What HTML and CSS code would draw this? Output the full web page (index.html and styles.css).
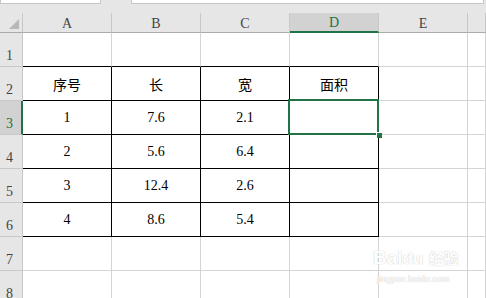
FILE: index.html
```html
<!DOCTYPE html>
<html lang="zh-CN">
<head>
  <meta charset="UTF-8">
  <title>Sheet1</title>
  <link rel="stylesheet" href="styles.css">
</head>
<body>
  <div class="sheet">
    <div class="topbar">
      <div class="namebox"></div>
      <div class="formula"></div>
    </div>

    <div class="grid">
      <div class="hd corner"><span class="tri"></span></div>
      <div class="hd col">A</div>
      <div class="hd col">B</div>
      <div class="hd col">C</div>
      <div class="hd col active">D</div>
      <div class="hd col">E</div>
      <div class="hd col"></div>

      <div class="hd row">1</div>
      <div class="cell edge-b"></div><div class="cell edge-b"></div><div class="cell edge-b"></div><div class="cell edge-b"></div><div class="cell"></div><div class="cell"></div>

      <div class="hd row">2</div>
      <div class="cell box">序号</div><div class="cell box">长</div><div class="cell box">宽</div><div class="cell box">面积</div><div class="cell"></div><div class="cell"></div>

      <div class="hd row active">3</div>
      <div class="cell box">1</div><div class="cell box">7.6</div><div class="cell box">2.1</div><div class="cell box selected"></div><div class="cell"></div><div class="cell"></div>

      <div class="hd row">4</div>
      <div class="cell box">2</div><div class="cell box">5.6</div><div class="cell box">6.4</div><div class="cell box"></div><div class="cell"></div><div class="cell"></div>

      <div class="hd row">5</div>
      <div class="cell box">3</div><div class="cell box">12.4</div><div class="cell box">2.6</div><div class="cell box"></div><div class="cell"></div><div class="cell"></div>

      <div class="hd row">6</div>
      <div class="cell box">4</div><div class="cell box">8.6</div><div class="cell box">5.4</div><div class="cell box"></div><div class="cell"></div><div class="cell"></div>

      <div class="hd row">7</div>
      <div class="cell"></div><div class="cell"></div><div class="cell"></div><div class="cell"></div><div class="cell"></div><div class="cell"></div>

      <div class="hd row">8</div>
      <div class="cell"></div><div class="cell"></div><div class="cell"></div><div class="cell"></div><div class="cell"></div><div class="cell"></div>
    </div>

    <div class="watermark">
      <div class="wm-logo">Bai<span class="paw">du</span> <span class="wm-cn">经验</span></div>
      <div class="wm-url">jingyan.baidu.com</div>
    </div>
  </div>
</body>
</html>
```

FILE: styles.css
```css
body {
  margin: 0;
  font-family: "Liberation Serif", "Noto Sans CJK SC", serif;
  color: #000;
  background: #fff;
}
.sheet {
  position: relative;
  width: 486px;
  height: 298px;
  overflow: hidden;
  background: #e6e6e6;
}
.topbar {
  display: flex;
  height: 4px;
  margin-bottom: 9px;
}
.namebox, .formula {
  height: 3px;
  background: #fff;
  border: 1px solid #c6c6c6;
  border-top: none;
}
.namebox {
  width: 99px;
}
.formula {
  margin-left: 30px;
  width: 351px;
}
.grid {
  display: grid;
  grid-template-columns: 23px repeat(5, 89px) 1fr;
  grid-template-rows: 20px;
  grid-auto-rows: 34px;
  background: #fff;
}
.hd {
  box-sizing: border-box;
  background: #e6e6e6;
  color: #444;
  font-size: 14px;
  border-right: 1px solid #c8c8c8;
  border-bottom: 1px solid #ababab;
}
.corner {
  position: relative;
}
.tri {
  position: absolute;
  right: 3px;
  bottom: 3px;
  width: 0;
  height: 0;
  border-left: 10px solid transparent;
  border-bottom: 10px solid #b8b8b8;
}
.col {
  display: flex;
  align-items: center;
  justify-content: center;
  padding-top: 2px;
}
.col.active {
  background: #d2d2d2;
  color: #217346;
  border-bottom: 2px solid #217346;
}
.row {
  display: flex;
  align-items: flex-end;
  padding: 0 0 2px 6px;
  border-bottom: 1px solid #c8c8c8;
}
.row.active {
  background: #d2d2d2;
  color: #217346;
  border-right: 2px solid #217346;
}
.cell {
  box-sizing: border-box;
  border-right: 1px solid #d4d4d4;
  border-bottom: 1px solid #d4d4d4;
  display: flex;
  align-items: center;
  justify-content: center;
  font-size: 14px;
}
.edge-b {
  border-bottom-color: #000;
}
.box {
  border-right-color: #000;
  border-bottom-color: #000;
  padding-top: 1px;
}
.selected {
  position: relative;
}
.selected::before {
  content: "";
  position: absolute;
  top: -2px;
  left: -2px;
  right: -1px;
  bottom: -1px;
  border: 2px solid #217346;
}
.selected::after {
  content: "";
  position: absolute;
  right: -4px;
  bottom: -4px;
  width: 5px;
  height: 5px;
  background: #217346;
  border: 1px solid #fff;
  border-right: none;
  border-bottom: none;
}
.watermark {
  position: absolute;
  left: 373px;
  top: 247px;
  color: #fff;
  font-family: "Liberation Sans", "Noto Sans CJK SC", sans-serif;
  text-shadow: 0 0 1px #d0d0d0, 0 0 1px #d0d0d0;
}
.wm-logo {
  font-size: 19px;
  font-weight: bold;
  line-height: 22px;
}
.paw {
  font-size: 17px;
}
.wm-cn {
  font-size: 15px;
}
.wm-url {
  font-size: 9px;
  line-height: 11px;
  margin-left: 4px;
  margin-top: 4px;
}
```
